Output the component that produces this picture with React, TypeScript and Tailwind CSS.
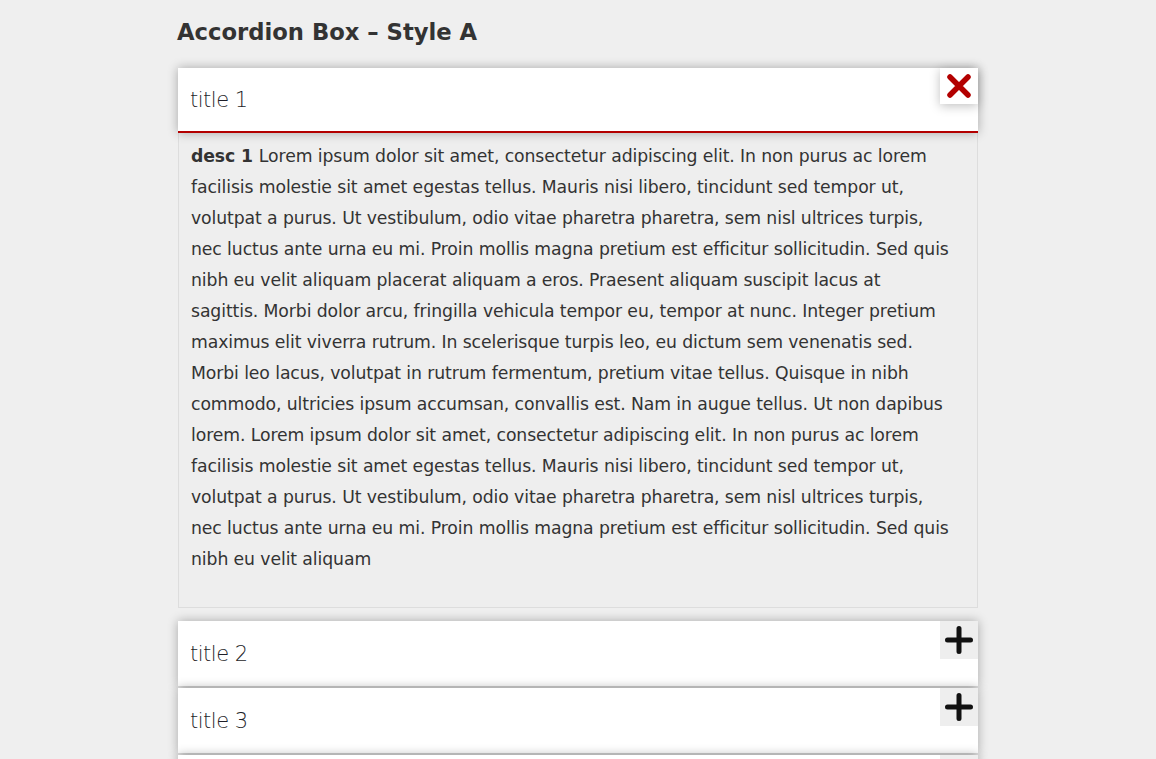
import { useState } from 'react';

// lines broken as in the design so the paragraph keeps its shape
const descLines = [
  'Lorem ipsum dolor sit amet, consectetur adipiscing elit. In non purus ac lorem',
  'facilisis molestie sit amet egestas tellus. Mauris nisi libero, tincidunt sed tempor ut,',
  'volutpat a purus. Ut vestibulum, odio vitae pharetra pharetra, sem nisl ultrices turpis,',
  'nec luctus ante urna eu mi. Proin mollis magna pretium est efficitur sollicitudin. Sed quis',
  'nibh eu velit aliquam placerat aliquam a eros. Praesent aliquam suscipit lacus at',
  'sagittis. Morbi dolor arcu, fringilla vehicula tempor eu, tempor at nunc. Integer pretium',
  'maximus elit viverra rutrum. In scelerisque turpis leo, eu dictum sem venenatis sed.',
  'Morbi leo lacus, volutpat in rutrum fermentum, pretium vitae tellus. Quisque in nibh',
  'commodo, ultricies ipsum accumsan, convallis est. Nam in augue tellus. Ut non dapibus',
  'lorem. Lorem ipsum dolor sit amet, consectetur adipiscing elit. In non purus ac lorem',
  'facilisis molestie sit amet egestas tellus. Mauris nisi libero, tincidunt sed tempor ut,',
  'volutpat a purus. Ut vestibulum, odio vitae pharetra pharetra, sem nisl ultrices turpis,',
  'nec luctus ante urna eu mi. Proin mollis magna pretium est efficitur sollicitudin. Sed quis',
  'nibh eu velit aliquam',
];

const items = [
  { title: 'title 1', label: 'desc 1' },
  { title: 'title 2', label: 'desc 2' },
  { title: 'title 3', label: 'desc 3' },
  { title: 'title 4', label: 'desc 4' },
];

const CloseIcon = () => (
  <svg width="26" height="26" viewBox="0 0 26 26">
    <path d="M4 4 L22 22 M22 4 L4 22" stroke="#b30000" strokeWidth="5.5" strokeLinecap="round" />
  </svg>
);

const PlusIcon = () => (
  <svg width="28" height="28" viewBox="0 0 28 28">
    <path d="M14 2.5 V25.5 M2.5 14 H25.5" stroke="#111" strokeWidth="5" strokeLinecap="round" />
  </svg>
);

const App = () => {
  const [open, setOpen] = useState(0);

  return (
    <div className="min-h-screen bg-[#efefef] text-[#333] font-['DejaVu_Sans',sans-serif]">
      <div className="w-[800px] mx-auto pt-[14px]">
        <h2 className="text-[22.7px] leading-[36px] font-bold text-[#333] mb-[18px] -ml-px">
          Accordion Box – Style A
        </h2>

        {items.map((item, i) => {
          const isOpen = open === i;
          return (
            <div key={item.title} className={isOpen ? 'mb-[13px]' : 'mb-[2px]'}>
              <div
                onClick={() => setOpen(isOpen ? -1 : i)}
                className={`relative h-[65px] bg-white flex items-center pl-[12px] pt-[3px] cursor-pointer shadow-[0_0_10px_rgba(0,0,0,0.3)] ${
                  isOpen ? 'border-b-2 border-[#b30000]' : ''
                }`}
              >
                <span className="text-[21px] tracking-[-0.5px] font-light text-[#1e1e28]">{item.title}</span>
                {isOpen ? (
                  <span className="absolute top-0 right-0 w-[38px] h-[36px] bg-white flex items-center justify-center shadow-[0_2px_10px_rgba(0,0,0,0.25)]">
                    <CloseIcon />
                  </span>
                ) : (
                  <span className="absolute top-0 right-0 w-[38px] h-[38px] bg-[#eeeeee] flex items-center justify-center">
                    <PlusIcon />
                  </span>
                )}
              </div>
              {isOpen && (
                <div className="bg-[#eeeeee] border border-t-0 border-[#dddddd] px-[12px] pt-[8px] pb-[32px]">
                  <p className="text-[17.25px] leading-[31px] text-[#333] whitespace-nowrap tracking-[-0.1px]">
                    {descLines.map((line, n) => (
                      <span key={n} className="block">
                        {n === 0 && <b>{item.label} </b>}
                        {line}
                      </span>
                    ))}
                  </p>
                </div>
              )}
            </div>
          );
        })}
      </div>
    </div>
  );
};

export default App;
